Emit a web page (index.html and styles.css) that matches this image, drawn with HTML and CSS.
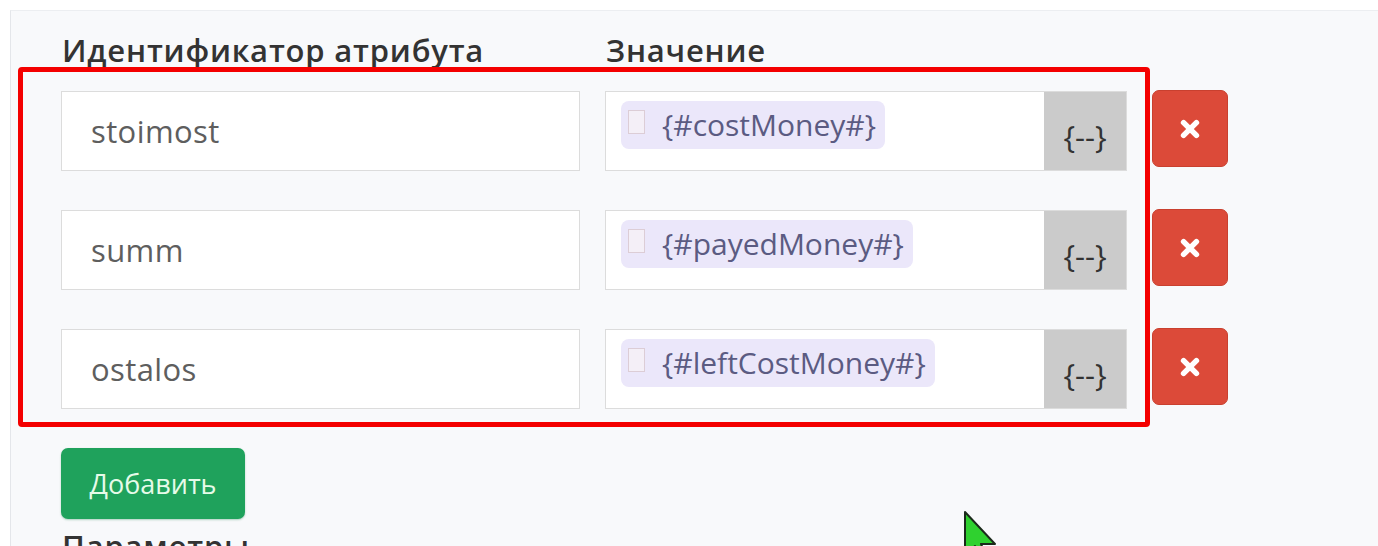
FILE: index.html
```html
<!DOCTYPE html>
<html lang="ru">
<head>
<meta charset="utf-8">
<title>Атрибуты</title>
<link rel="stylesheet" href="styles.css">
</head>
<body>
<div class="panel">
  <div class="line head-line">
    <div class="head">Идентификатор атрибута</div>
    <div class="head">Значение</div>
    <div></div>
  </div>
  <div class="rows">
    <div class="line row">
      <div class="field">stoimost</div>
      <div class="value">
        <div class="editor"><span class="chip"><span class="chk"></span>{#costMoney#}</span></div>
        <div class="addon">{--}</div>
      </div>
      <button class="del" type="button"><svg viewBox="0 0 24 24" width="22" height="22"><path d="M5 5 L19 19 M19 5 L5 19" stroke="#fff" stroke-width="6" stroke-linecap="round" fill="none"/></svg></button>
    </div>
    <div class="line row">
      <div class="field">summ</div>
      <div class="value">
        <div class="editor"><span class="chip"><span class="chk"></span>{#payedMoney#}</span></div>
        <div class="addon">{--}</div>
      </div>
      <button class="del" type="button"><svg viewBox="0 0 24 24" width="22" height="22"><path d="M5 5 L19 19 M19 5 L5 19" stroke="#fff" stroke-width="6" stroke-linecap="round" fill="none"/></svg></button>
    </div>
    <div class="line row">
      <div class="field">ostalos</div>
      <div class="value">
        <div class="editor"><span class="chip"><span class="chk"></span>{#leftCostMoney#}</span></div>
        <div class="addon">{--}</div>
      </div>
      <button class="del" type="button"><svg viewBox="0 0 24 24" width="22" height="22"><path d="M5 5 L19 19 M19 5 L5 19" stroke="#fff" stroke-width="6" stroke-linecap="round" fill="none"/></svg></button>
    </div>
  </div>
  <button class="add" type="button">Добавить</button>
  <div class="head next">Параметры</div>
</div>
<div class="annot"></div>
<svg class="cursor" width="40" height="60" viewBox="0 0 20 30"><path d="M1 1 L1 23 L6 18 L10 27 L13 26 L9 17 L16 17 Z" fill="#2fd12f" stroke="#1b2a1b" stroke-width="1" stroke-linejoin="round"/></svg>
</body>
</html>
```

FILE: styles.css
```css
html, body {
  margin: 0;
  padding: 0;
  height: 100%;
  background: #ffffff;
  overflow: hidden;
}
body {
  position: relative;
  font-family: "Open Sans", "Noto Sans", sans-serif;
}
.panel {
  margin: 10px 0 0 10px;
  min-height: 600px;
  background: #f8f9fb;
  border-left: 1px solid #e4e6ea;
  border-top: 1px solid #eceef1;
  padding: 19px 0 0 50px;
  box-sizing: border-box;
}
.line {
  display: grid;
  grid-template-columns: 519px 522px 76px;
  column-gap: 25px;
}
.head {
  font-size: 31px;
  font-weight: 600;
  line-height: 40px;
  color: #333333;
  letter-spacing: 0.8px;
  padding-left: 1px;
}
.rows {
  margin-top: 21px;
  display: flex;
  flex-direction: column;
  gap: 39px;
}
.row {
  align-items: start;
}
.field {
  height: 80px;
  box-sizing: border-box;
  border: 1px solid #dcdcdc;
  background: #ffffff;
  display: flex;
  align-items: center;
  padding-left: 29px;
  font-size: 31px;
  letter-spacing: 0.4px;
  color: #5e5e5e;
}
.value {
  height: 80px;
  box-sizing: border-box;
  border: 1px solid #dcdcdc;
  background: #ffffff;
  display: flex;
}
.editor {
  flex: 1;
  padding: 9px 0 0 15px;
}
.chip {
  display: inline-flex;
  align-items: center;
  gap: 17px;
  height: 48px;
  box-sizing: border-box;
  padding: 0 9px 2px 7px;
  background: #ebe7fa;
  border-radius: 8px;
  font-size: 30px;
  color: #5b5b82;
}
.chk {
  width: 17px;
  height: 24px;
  box-sizing: border-box;
  border: 1.5px solid #dccdd6;
  background: #f4eff7;
  margin-top: -5px;
}
.addon {
  width: 82px;
  background: #cbcbcb;
  display: flex;
  align-items: center;
  justify-content: center;
  padding-top: 10px;
  box-sizing: border-box;
  font-size: 31px;
  color: #333333;
}
.del {
  width: 76px;
  height: 77px;
  margin-top: -1px;
  border: 1px solid #c9402f;
  border-radius: 7px;
  background: #dc4a39;
  display: flex;
  align-items: center;
  justify-content: center;
  padding: 0;
}
.add {
  display: block;
  margin-top: 39px;
  width: 184px;
  height: 71px;
  border: none;
  border-radius: 7px;
  background: #1fa25c;
  color: #e6fbe9;
  font-family: "Open Sans", "Noto Sans", sans-serif;
  font-size: 27px;
  padding: 0;
  box-shadow: 0 1px 2px rgba(0, 120, 60, 0.3);
}
.next {
  margin-top: 7px;
}
.annot {
  position: absolute;
  left: 18px;
  top: 67px;
  width: 1132px;
  height: 360px;
  box-sizing: border-box;
  border: 5px solid #f40000;
  border-radius: 4px;
}
.cursor {
  position: absolute;
  left: 963px;
  top: 510px;
}
```
